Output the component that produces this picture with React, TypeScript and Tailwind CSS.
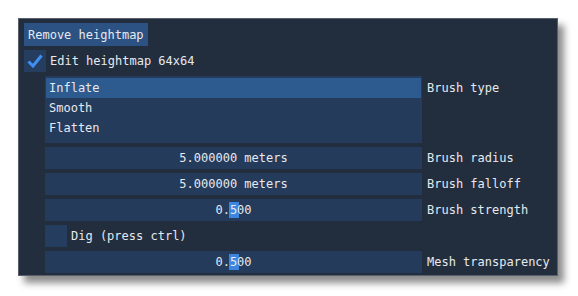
const mono = 'font-["DejaVu_Sans_Mono",monospace] text-[12px] text-[#e6e9ee]';

function SliderRow({ value, label, grab }: { value: string; label: string; grab?: boolean }) {
  return (
    <div className="flex items-center gap-[5px] pl-[21px]">
      <div className="relative flex h-[22px] w-[377px] items-center justify-center bg-[#243b5c]">
        {grab && <div className="absolute left-[184px] top-[3px] h-[16px] w-[10px] bg-[#3d86e0]" />}
        <span className="relative">{value}</span>
      </div>
      <span>{label}</span>
    </div>
  );
}

export default function App() {
  const brushes = ['Inflate', 'Smooth', 'Flatten'];

  return (
    <div className="h-[296px] w-[578px] bg-white pl-[18px] pt-[18px]">
      <div
        className={`flex h-[258px] w-[540px] flex-col gap-[4px] border border-[#59606b] bg-[#222e3e] pl-[5px] pt-[4px] shadow-[6px_7px_7px_rgba(0,0,0,0.45)] ${mono}`}
      >
        <div className="flex">
          <div className="flex h-[23px] items-center bg-[#2b5283] px-[4px]">Remove heightmap</div>
        </div>

        <div className="flex items-center gap-[4px]">
          <div className="flex h-[22px] w-[22px] items-center justify-center bg-[#253d5e]">
            <svg width="18" height="18" viewBox="0 0 18 18">
              <polyline points="2.5,9.5 7,14 15.5,3.5" fill="none" stroke="#3f8ef2" strokeWidth="3" />
            </svg>
          </div>
          <span>Edit heightmap 64x64</span>
        </div>

        <div className="flex items-start gap-[5px] pl-[21px]">
          <div className="flex h-[67px] w-[377px] flex-col bg-[#243b5c] pt-[2px]">
            {brushes.map((b, i) => (
              <div
                key={b}
                className={`mx-[1px] flex h-[20px] items-center px-[3px] ${i === 0 ? 'bg-[#2d5a8f]' : ''}`}
              >
                {b}
              </div>
            ))}
          </div>
          <span className="pt-[3px]">Brush type</span>
        </div>

        <SliderRow value="5.000000 meters" label="Brush radius" />
        <SliderRow value="5.000000 meters" label="Brush falloff" />
        <SliderRow value="0.500" label="Brush strength" grab />

        <div className="flex items-center gap-[4px] pl-[21px]">
          <div className="h-[22px] w-[22px] bg-[#253d5e]" />
          <span>Dig (press ctrl)</span>
        </div>

        <SliderRow value="0.500" label="Mesh transparency" grab />
      </div>
    </div>
  );
}
